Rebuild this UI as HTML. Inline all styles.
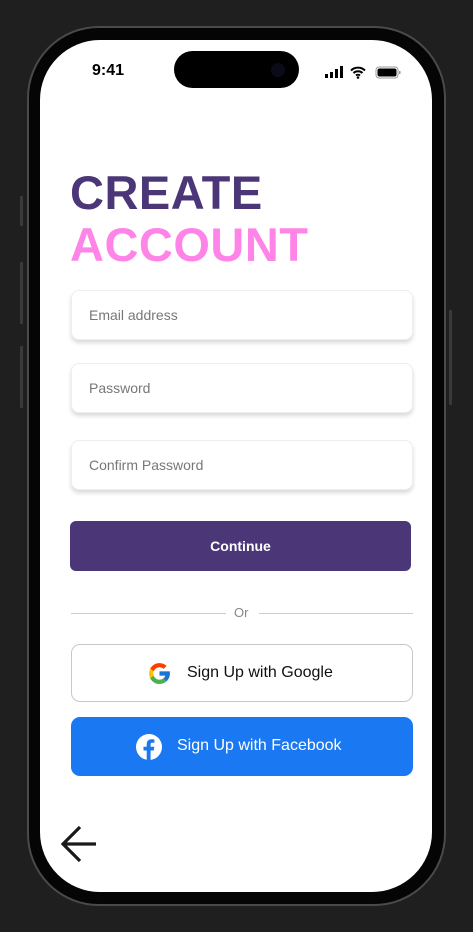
<!DOCTYPE html>
<html><head><style>
*{margin:0;padding:0;box-sizing:border-box}
body{width:473px;height:932px;background:#1f1f1f;position:relative;overflow:hidden;font-family:"Liberation Sans",sans-serif}
.frame{position:absolute;left:27px;top:26px;width:419px;height:880px;border-radius:72px;background:#050505;border:2px solid #4a4a4a}
.btn-side{position:absolute;background:#3a3a3a;width:3px;border-radius:1px}
.screen{position:absolute;left:40px;top:40px;width:392px;height:852px;border-radius:60px;background:#fff;overflow:hidden}
.island{position:absolute;left:174px;top:51px;width:125px;height:37px;border-radius:19px;background:#000}
.time{position:absolute;left:92px;top:62px;font-size:16px;font-weight:bold;color:#000}
.h{position:absolute;left:70px;font-size:47px;font-weight:bold;letter-spacing:0.5px;line-height:1}
.inp{position:absolute;left:71px;width:342px;height:50px;border:1px solid #eee;border-radius:8px;box-shadow:0 3px 4px rgba(0,0,0,.15);font-size:14px;color:#777;padding-left:17px;line-height:48px;background:#fff}
.cont{position:absolute;left:70px;top:521px;width:341px;height:50px;border-radius:6px;background:#4b3777;color:#fff;font-weight:bold;font-size:14px;text-align:center;line-height:50px}
.line{position:absolute;top:613px;height:1px;background:#ccc}
.or{position:absolute;left:234px;top:605px;font-size:13px;color:#888}
.g{position:absolute;left:71px;top:644px;width:342px;height:58px;border:1.5px solid #c8c8c8;border-radius:9px;background:#fff;font-size:16px;color:#111}
.f{position:absolute;left:71px;top:717px;width:342px;height:59px;border-radius:9px;background:#1a78f2;font-size:16px;color:#fff}
</style></head><body>
<div class="btn-side" style="left:20px;top:196px;height:30px"></div>
<div class="btn-side" style="left:20px;top:262px;height:62px"></div>
<div class="btn-side" style="left:20px;top:346px;height:62px"></div>
<div class="btn-side" style="left:449px;top:310px;height:95px"></div>
<div class="frame"></div>
<div class="screen"></div>
<div class="island"></div>
<div style="position:absolute;left:271px;top:63px;width:14px;height:14px;border-radius:50%;background:#0a0a1a"></div>
<div class="time">9:41</div>
<svg style="position:absolute;left:325px;top:66px" width="78" height="14">
<rect x="0" y="8" width="3" height="4" fill="#000"/><rect x="5" y="6" width="3" height="6" fill="#000"/><rect x="10" y="3" width="3" height="9" fill="#000"/><rect x="15" y="0" width="3" height="12" fill="#000"/>
<path d="M26 4.5a10 10 0 0 1 14 0M28.5 7a6.5 6.5 0 0 1 9 0M31 9.5a3 3 0 0 1 4 0" stroke="#000" stroke-width="2" fill="none"/><circle cx="33" cy="11.5" r="1.3"/>
<rect x="51" y="1" width="22" height="11" rx="3" fill="none" stroke="#999"/><rect x="52.5" y="2.5" width="19" height="8" rx="2" fill="#000"/><rect x="74" y="5" width="1.5" height="3" fill="#999"/>
</svg>
<div class="h" style="top:169px;color:#4b3777">CREATE</div>
<div class="h" style="top:221px;color:#ff84e8">ACCOUNT</div>
<div class="inp" style="top:290px">Email address</div>
<div class="inp" style="top:363px">Password</div>
<div class="inp" style="top:440px">Confirm Password</div>
<div class="cont">Continue</div>
<div class="line" style="left:71px;width:155px"></div>
<div class="line" style="left:259px;width:154px"></div>
<div class="or">Or</div>
<div class="g">
<svg style="position:absolute;left:75px;top:16px" width="25" height="25" viewBox="0 0 48 48"><path fill="#FFC107" d="M43.6 20H24v8h11.3C33.7 33 29.3 36 24 36c-6.6 0-12-5.4-12-12s5.4-12 12-12c3 0 5.8 1.1 7.9 3l5.7-5.7C34 6 29.3 4 24 4 13 4 4 13 4 24s9 20 20 20 20-9 20-20c0-1.3-.1-2.7-.4-4z"/><path fill="#FF3D00" d="M6.3 14.7l6.6 4.8C14.7 15.1 19 12 24 12c3 0 5.8 1.1 7.9 3l5.7-5.7C34 6 29.3 4 24 4 16.3 4 9.7 8.3 6.3 14.7z"/><path fill="#4CAF50" d="M24 44c5.2 0 9.9-2 13.4-5.2l-6.2-5.2C29.2 35.1 26.7 36 24 36c-5.2 0-9.6-3.3-11.3-8l-6.5 5C9.5 39.6 16.2 44 24 44z"/><path fill="#1976D2" d="M43.6 20H24v8h11.3c-.8 2.2-2.2 4.2-4.1 5.6l6.2 5.2C37 39.2 44 34 44 24c0-1.3-.1-2.7-.4-4z"/></svg>
<span style="position:absolute;left:115px;top:19px">Sign Up with Google</span></div>
<div class="f">
<svg style="position:absolute;left:65px;top:17px" width="26" height="26" viewBox="0 0 26 26"><circle cx="13" cy="13" r="13" fill="#fff"/><path d="M14.6 26V16.5h3.2l.5-3.7h-3.7v-2.3c0-1.1.3-1.8 1.8-1.8h2V5.4c-.3 0-1.5-.2-2.9-.2-2.9 0-4.8 1.7-4.8 5v2.6H7.5v3.7h3.2V26z" fill="#1a78f2"/></svg>
<span style="position:absolute;left:106px;top:20px">Sign Up with Facebook</span></div>
<svg style="position:absolute;left:58px;top:823px" width="42" height="42"><path d="M38 21H5M22 4L5 21l17 17" stroke="#1a1a1a" stroke-width="3.2" fill="none"/></svg>
</body></html>
